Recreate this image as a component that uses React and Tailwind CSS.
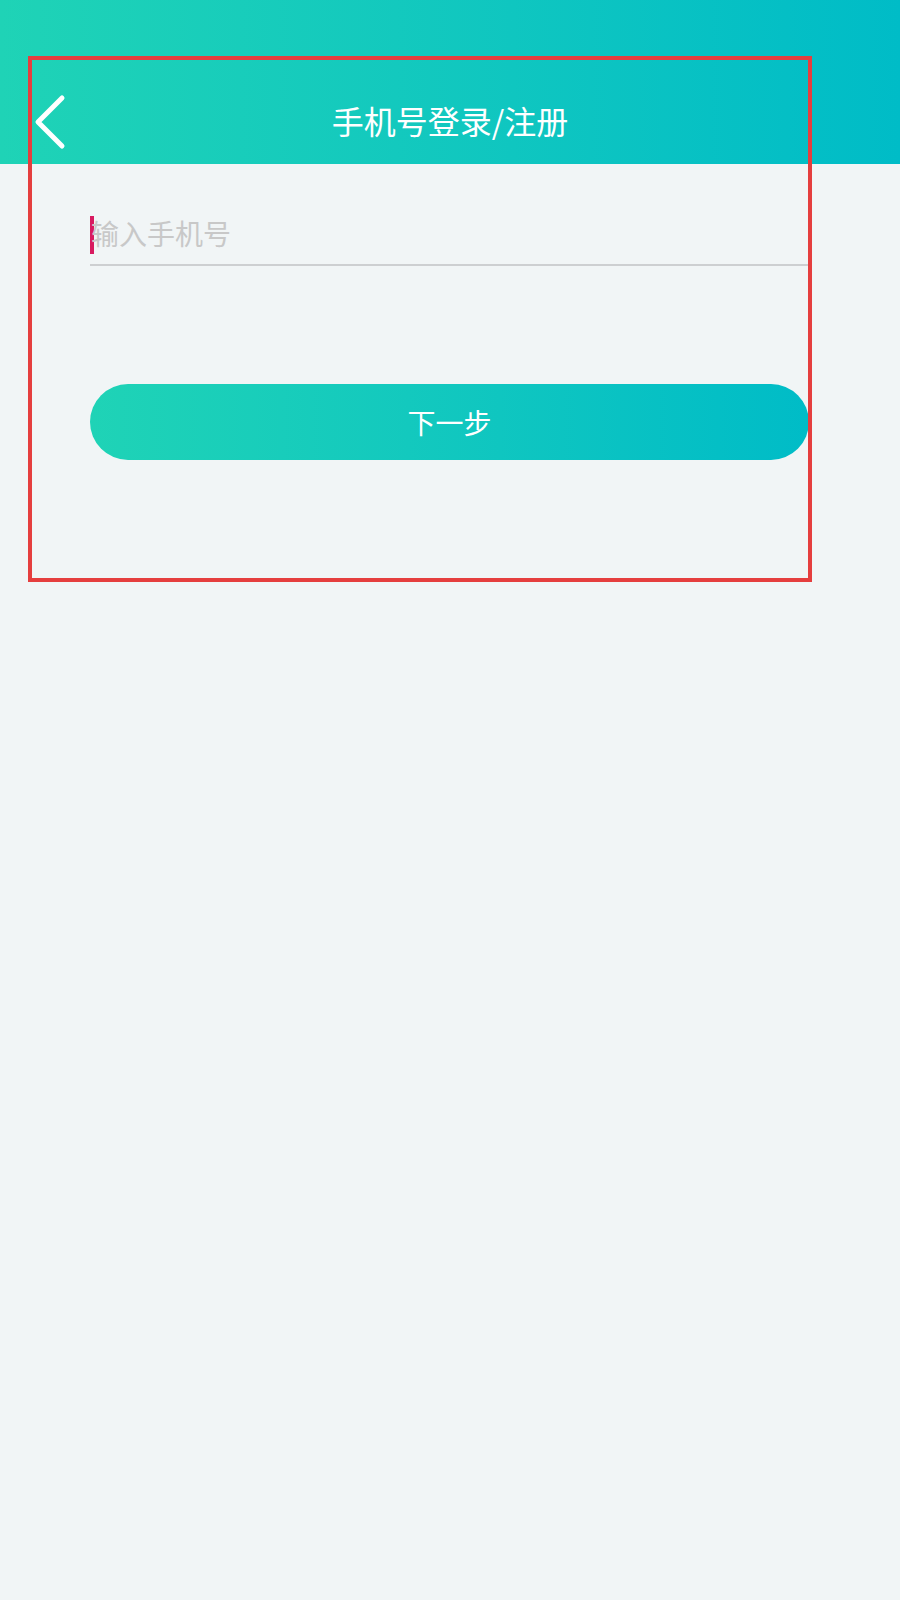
import { useState } from "react"

function BackIcon() {
  return (
    <svg width="36" height="56" viewBox="0 0 36 56" fill="none">
      <path d="M30 4 L6 28 L30 52" stroke="white" strokeWidth="5" strokeLinecap="round" strokeLinejoin="round" />
    </svg>
  )
}

export default function App() {
  const [phone] = useState("")

  return (
    <div
      className="relative min-h-[1600px] w-full bg-[#f1f5f6]"
      style={{ fontFamily: '"Noto Sans CJK SC", "Noto Sans", sans-serif' }}
    >
      {/* header */}
      <div className="h-[164px] bg-gradient-to-r from-[#1fd3b6] to-[#00bcc7] pt-[80px]">
        <div className="grid h-[84px] grid-cols-[1fr_auto_1fr] items-center">
          <div className="flex pl-[32px]">
            <button>
              <BackIcon />
            </button>
          </div>
          <h1 className="pb-[4px] text-[32px] leading-none text-white">手机号登录/注册</h1>
          <div />
        </div>
      </div>

      {/* form */}
      <div className="pl-[90px] pr-[91px]">
        <div className="mt-[42px] flex h-[60px] items-center border-b-2 border-[#cdcfd1]">
          <span className="h-[38px] w-[4px] shrink-0 bg-[#d81b60]" />
          <span className="-ml-[3px] pb-[4px] text-[28px] leading-none text-[#c8c8c8]">{phone || "输入手机号"}</span>
        </div>

        <button className="mt-[118px] flex h-[76px] w-full items-center justify-center rounded-full bg-gradient-to-r from-[#1fd3b6] to-[#00bcc7] text-[28px] text-white">
          下一步
        </button>
      </div>

      {/* highlight frame */}
      <div className="pointer-events-none absolute left-[28px] top-[56px] h-[526px] w-[784px] border-[4px] border-[#e53e3e]" />
    </div>
  )
}
